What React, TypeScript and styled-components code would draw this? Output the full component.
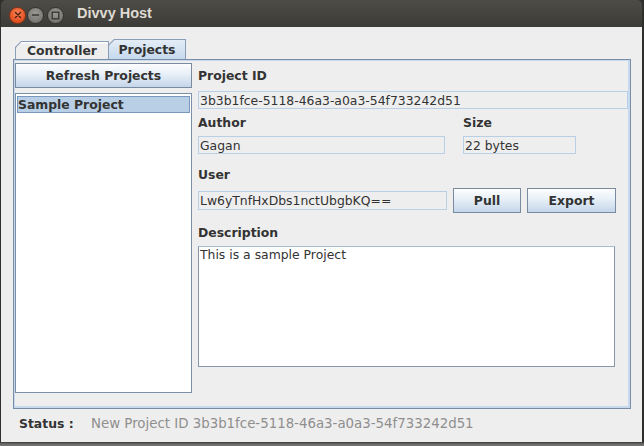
import React from "react";
import styled, { createGlobalStyle } from "styled-components";

const GlobalStyle = createGlobalStyle`
  html, body {
    margin: 0;
    padding: 0;
    width: 644px;
    height: 446px;
    overflow: hidden;
    background: #2f2f2d;
  }
  body {
    font-family: "DejaVu Sans", "Liberation Sans", sans-serif;
  }
  * { box-sizing: border-box; }
`;

const Desktop = styled.div`
  width: 644px;
  height: 446px;
  padding-left: 1px;
  background: linear-gradient(to bottom, #2f2f2d 0, #2f2f2d 442px, #5a5a58 443px, #7b7b79 446px);
`;

const Window = styled.div`
  width: 641px;
  height: 442px;
  display: flex;
  flex-direction: column;
  border-radius: 5px 5px 0 0;
  overflow: hidden;
`;

const TitleBar = styled.div`
  height: 27px;
  flex: none;
  display: flex;
  align-items: center;
  padding-left: 8px;
  background: linear-gradient(to bottom, #4d4c47, #3c3b37);
`;

const Controls = styled.div`
  display: flex;
  align-items: center;
  margin-top: 3px;
`;

const CircleBtn = styled.div<{ $kind: "close" | "plain"; $gap: number }>`
  width: 17px;
  height: 17px;
  border-radius: 50%;
  margin-right: ${(p) => p.$gap}px;
  display: flex;
  align-items: center;
  justify-content: center;
  border: 1px solid ${(p) => (p.$kind === "close" ? "#8a3515" : "#35342f")};
  background: ${(p) =>
    p.$kind === "close"
      ? "radial-gradient(circle at 50% 35%, #f7855a 0, #e8592a 55%, #c8410f 100%)"
      : "radial-gradient(circle at 50% 35%, #9a9993 0, #7e7d77 60%, #65645f 100%)"};
`;

const Title = styled.div`
  font-family: "Liberation Sans", "DejaVu Sans", sans-serif;
  font-weight: bold;
  font-size: 14.5px;
  color: #dfdbd2;
  margin-left: 13px;
  margin-top: -1px;
`;

const Body = styled.div`
  flex: 1;
  background: #eeeeee;
  display: flex;
  flex-direction: column;
  padding: 13px 11px 0 12px;
`;

const TabStrip = styled.div`
  height: 19px;
  display: flex;
  align-items: flex-end;
  margin-left: 2px;
  position: relative;
  z-index: 1;
`;

const TabOuter = styled.div<{ $active: boolean; $w: number }>`
  width: ${(p) => p.$w}px;
  height: ${(p) => (p.$active ? 20 : 18)}px;
  margin-left: ${(p) => (p.$active ? -1 : 0)}px;
  padding: 1px 1px 0 1px;
  background: #8a9db6;
  clip-path: polygon(6px 0, 100% 0, 100% 100%, 0 100%, 0 6px);
`;

const TabInner = styled.div<{ $active: boolean }>`
  width: 100%;
  height: 100%;
  display: flex;
  align-items: center;
  justify-content: center;
  padding-bottom: ${(p) => (p.$active ? 1 : 0)}px;
  font-weight: bold;
  font-size: 12.4px;
  color: #333333;
  clip-path: polygon(5.5px 0, 100% 0, 100% 100%, 0 100%, 0 5.5px);
  background: ${(p) =>
    p.$active
      ? "linear-gradient(to bottom, #e3edf7, #c6d9ed)"
      : "linear-gradient(to bottom, #ffffff 0, #ffffff 1px, #eeeeee 2px, #eeeeee)"};
`;

const Panel = styled.div`
  height: 350px;
  flex: none;
  border: 1px solid #7b8da6;
  box-shadow: inset 1px 1px 0 #c7d9ec, inset -2px -2px 0 #c7d9ec;
  background: #eeeeee;
  display: grid;
  grid-template-columns: 177px 1fr;
  column-gap: 6px;
  padding: 3px 2px 15px 1px;
`;

const LeftCol = styled.div`
  display: flex;
  flex-direction: column;
  gap: 5px;
`;

const Button = styled.div<{ $w?: number }>`
  width: ${(p) => (p.$w ? `${p.$w}px` : "100%")};
  height: 25px;
  flex: none;
  border: 1px solid #7a8a9f;
  background: linear-gradient(to bottom, #fcfdfe 0%, #eaf1f8 40%, #c4d6ea 100%);
  display: flex;
  align-items: center;
  justify-content: center;
  font-weight: bold;
  font-size: 12.4px;
  color: #333333;
`;

const List = styled.div`
  flex: 1;
  background: #ffffff;
  border: 1px solid #7d8fa6;
  padding: 2px 1px;
`;

const ListItem = styled.div<{ $selected: boolean }>`
  height: 17px;
  display: flex;
  align-items: center;
  padding-left: 0;
  font-weight: bold;
  font-size: 12.4px;
  color: #333333;
  background: ${(p) => (p.$selected ? "#b8cfe5" : "transparent")};
  border: 1px solid ${(p) => (p.$selected ? "#7a98bd" : "transparent")};
`;

const RightCol = styled.div`
  display: flex;
  flex-direction: column;
  min-width: 0;
`;

const Label = styled.div<{ $mt: number }>`
  height: 16px;
  line-height: 16px;
  margin-top: ${(p) => p.$mt}px;
  font-weight: bold;
  font-size: 12.4px;
  color: #333333;
`;

const Field = styled.div<{ $mt?: number; $w?: number; $h?: number }>`
  width: ${(p) => (p.$w ? `${p.$w}px` : "100%")};
  height: ${(p) => p.$h ?? 18}px;
  margin-top: ${(p) => p.$mt ?? 0}px;
  flex: none;
  border: 1px solid #b8cfe5;
  background: #eeeeee;
  display: flex;
  align-items: center;
  padding-left: 1px;
  font-size: 12.4px;
  color: #333333;
  white-space: nowrap;
  overflow: hidden;
`;

const MetaGrid = styled.div`
  display: grid;
  grid-template-columns: 247px 113px;
  column-gap: 18px;
  row-gap: 5px;
  margin-top: 6px;
`;

const UserRow = styled.div`
  display: flex;
  align-items: center;
  gap: 6px;
  margin-top: 5px;
  height: 25px;
`;

const TextArea = styled.div`
  width: 417px;
  height: 121px;
  margin-top: 5px;
  background: #ffffff;
  border: 1px solid #8596ab;
  border-top-color: #a9bdd3;
  padding: 0 1px;
  font-size: 12.4px;
  line-height: 16px;
  color: #333333;
`;

const StatusBar = styled.div`
  height: 28px;
  display: flex;
  align-items: center;
  padding-left: 6px;
`;

const StatusLabel = styled.div`
  font-weight: bold;
  font-size: 12.4px;
  color: #333333;
  width: 72px;
`;

const StatusValue = styled.div`
  font-size: 13.35px;
  color: #8e8e8e;
`;

export default function App() {
  return (
    <>
      <GlobalStyle />
      <Desktop>
        <Window>
          <TitleBar>
            <Controls>
              <CircleBtn $kind="close" $gap={1}>
                <svg width="8" height="8" viewBox="0 0 8 8">
                  <path d="M1.5 1.5 L6.5 6.5 M6.5 1.5 L1.5 6.5" stroke="#4a1d0c" strokeWidth="1.4" strokeLinecap="round" />
                </svg>
              </CircleBtn>
              <CircleBtn $kind="plain" $gap={3}>
                <svg width="9" height="8" viewBox="0 0 9 8">
                  <path d="M1 4 L8 4" stroke="#3a3935" strokeWidth="1.6" />
                </svg>
              </CircleBtn>
              <CircleBtn $kind="plain" $gap={0}>
                <svg width="9" height="9" viewBox="0 0 9 9">
                  <rect x="1.2" y="1.2" width="6.6" height="6.6" fill="none" stroke="#3a3935" strokeWidth="1.4" />
                </svg>
              </CircleBtn>
            </Controls>
            <Title>Divvy Host</Title>
          </TitleBar>
          <Body>
            <TabStrip>
              <TabOuter $active={false} $w={94}>
                <TabInner $active={false}>Controller</TabInner>
              </TabOuter>
              <TabOuter $active={true} $w={78}>
                <TabInner $active={true}>Projects</TabInner>
              </TabOuter>
            </TabStrip>
            <Panel>
              <LeftCol>
                <Button>Refresh Projects</Button>
                <List>
                  <ListItem $selected={true}>Sample Project</ListItem>
                </List>
              </LeftCol>
              <RightCol>
                <Label $mt={5}>Project ID</Label>
                <Field $mt={7}>3b3b1fce-5118-46a3-a0a3-54f733242d51</Field>
                <MetaGrid>
                  <Label $mt={0}>Author</Label>
                  <Label $mt={0}>Size</Label>
                  <Field>Gagan</Field>
                  <Field>22 bytes</Field>
                </MetaGrid>
                <Label $mt={13}>User</Label>
                <UserRow>
                  <Field $w={249} $h={19}>Lw6yTnfHxDbs1nctUbgbKQ==</Field>
                  <Button $w={68}>Pull</Button>
                  <Button $w={89}>Export</Button>
                </UserRow>
                <Label $mt={12}>Description</Label>
                <TextArea>This is a sample Project</TextArea>
              </RightCol>
            </Panel>
            <StatusBar>
              <StatusLabel>Status :</StatusLabel>
              <StatusValue>New Project ID 3b3b1fce-5118-46a3-a0a3-54f733242d51</StatusValue>
            </StatusBar>
          </Body>
        </Window>
      </Desktop>
    </>
  );
}
